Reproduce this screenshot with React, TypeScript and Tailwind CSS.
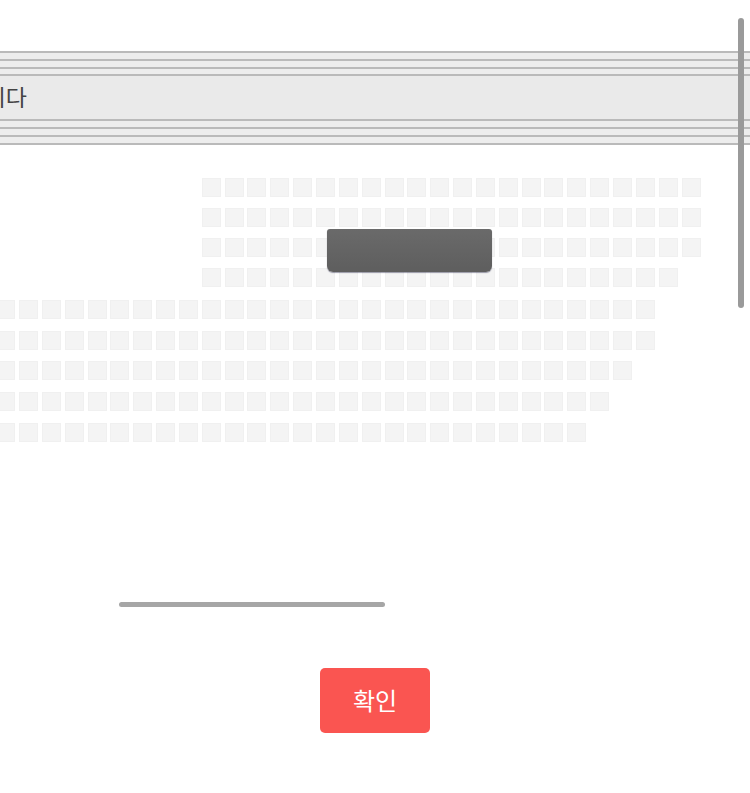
import React from "react";

const PITCH = 22.85;

// rows of seats: first and last column index, x = 19 + PITCH * index
const upperRows = [
  [8, 29],
  [8, 29],
  [8, 29],
  [8, 28],
];
const lowerRows = [
  [-1, 27],
  [-1, 27],
  [-1, 26],
  [-1, 25],
  [-1, 24],
];

function SeatRow({ from, to }: { from: number; to: number }) {
  const seats = [];
  for (let i = from; i <= to; i++) seats.push(i);
  return (
    <div className="flex h-[19px]" style={{ marginLeft: 19 + PITCH * from }}>
      {seats.map((i) => (
        <div
          key={i}
          className="w-[19px] h-[19px] shrink-0 bg-[#f4f4f4] border border-[#f0f0f0]"
          style={{ marginRight: PITCH - 19 }}
        />
      ))}
    </div>
  );
}

function Lines() {
  return (
    <div className="flex flex-col">
      <div className="h-[2px] bg-[#bababa]" />
      <div className="h-[5.8px] bg-[#ededed]" />
      <div className="h-[2px] bg-[#bababa]" />
      <div className="h-[5.8px] bg-[#ededed]" />
      <div className="h-[2px] bg-[#bababa]" />
      <div className="h-[5.8px] bg-[#ededed]" />
      <div className="h-[2px] bg-[#bababa]" />
    </div>
  );
}

export default function App() {
  return (
    <div
      className="relative w-[750px] h-[793px] overflow-hidden bg-white"
      style={{ fontFamily: '"Noto Sans CJK KR", "Noto Sans", sans-serif' }}
    >
      <div className="pt-[51px]">
        <Lines />
        <div className="h-[43px] bg-[#eaeaea] flex items-center">
          <div className="w-[27px] overflow-hidden flex justify-end">
            <span className="whitespace-nowrap text-[23px] leading-none text-[#444] -mt-[2px]">
              입니다
            </span>
          </div>
        </div>
        <Lines />
      </div>

      <div className="relative mt-[33px] flex flex-col">
        <div className="flex flex-col gap-[11px]">
          {upperRows.map(([a, b], i) => (
            <SeatRow key={i} from={a} to={b} />
          ))}
        </div>
        <div className="flex flex-col gap-[11.75px] mt-[13px]">
          {lowerRows.map(([a, b], i) => (
            <SeatRow key={i} from={a} to={b} />
          ))}
        </div>
        <div className="absolute left-[327px] top-[51px] w-[165px] h-[43px] rounded-t-[3px] rounded-b-[6px] bg-gradient-to-b from-[#6a6a6a] to-[#5e5e5e] shadow-[0_1px_1px_rgba(60,60,90,0.5)]" />
      </div>

      <div className="ml-[119px] mt-[160px] w-[266px] h-[5px] rounded-full bg-[#a6a6a6]" />

      <div className="ml-[320px] mt-[61px] w-[110px] h-[65px] rounded-[5px] bg-[#fa5551] flex items-center justify-center">
        <span className="text-white text-[24px] leading-none">확인</span>
      </div>

      <div className="absolute left-[738px] top-[18px] w-[6px] h-[290px] rounded-full bg-[#9a9a9a]" />
    </div>
  );
}
